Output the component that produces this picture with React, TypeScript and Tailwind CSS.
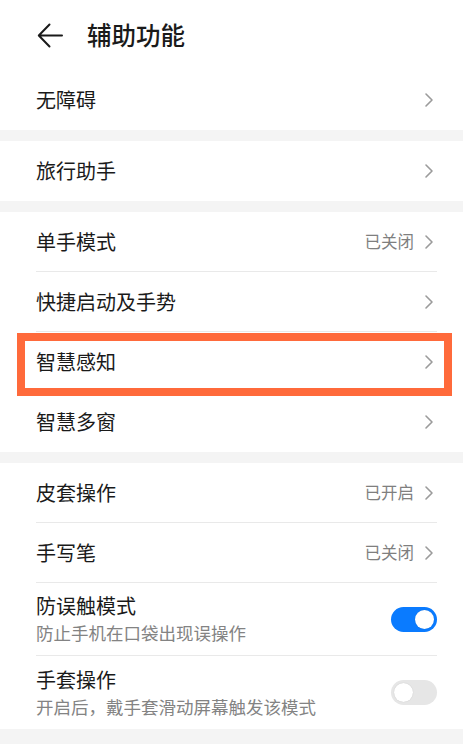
import { ReactNode } from 'react';

const Chevron = () => (
    <svg width="10" height="16" viewBox="0 0 10 16" fill="none" className="shrink-0">
        <polyline points="2,2 8,8 2,14" stroke="#9b9b9b" strokeWidth="1.6" strokeLinecap="round" strokeLinejoin="round" />
    </svg>
);

const Toggle = ({ on }: { on: boolean }) => (
    <div
        className={`flex h-[25px] w-[46px] shrink-0 items-center rounded-full px-[3px] ${
            on ? 'justify-end bg-[#0a7bff]' : 'justify-start bg-[#e6e6e6]'
        }`}
    >
        <div className="h-[19px] w-[19px] rounded-full bg-white shadow-[0_0_1px_rgba(0,0,0,0.2)]" />
    </div>
);

type RowProps = {
    title: string;
    value?: string;
    sub?: string;
    toggle?: boolean;
    last?: boolean;
    highlight?: boolean;
};

const Row = ({ title, value, sub, toggle, last, highlight }: RowProps) => (
    <div className="relative pl-[36px] pr-[26px]">
        <div
            className={`flex items-center justify-between ${sub ? 'h-[73px]' : 'h-[60px]'} ${
                last ? '' : 'border-b border-[#e9e9e9]'
            }`}
        >
            <div className="flex flex-col">
                <span className="text-[20px] leading-[26px] text-[#1a1a1a]">{title}</span>
                {sub && <span className="mt-[1px] text-[17.5px] leading-[25px] text-[#838383]">{sub}</span>}
            </div>
            {toggle !== undefined ? (
                <Toggle on={toggle} />
            ) : (
                <div className="flex items-center gap-[10px] pr-[3px]">
                    {value && <span className="text-[16.5px] text-[#7f7f7f]">{value}</span>}
                    <Chevron />
                </div>
            )}
        </div>
        {highlight && (
            <div className="pointer-events-none absolute left-[17px] top-[1px] h-[63px] w-[435px] border-[8px] border-[#ff6a3b]" />
        )}
    </div>
);

const Group = ({ children }: { children: ReactNode }) => <div className="bg-white">{children}</div>;

const Gap = () => <div className="h-[11px] bg-[#f4f4f4]" />;

export default function App() {
    return (
        <div
            className="h-[744px] w-[463px] overflow-hidden bg-[#f4f4f4]"
            style={{ fontFamily: '"Noto Sans CJK SC", "Noto Sans", sans-serif' }}
        >
            <Group>
                <div className="flex h-[70px] items-center pl-[37px]">
                    <svg width="27" height="27" viewBox="0 0 27 27" fill="none">
                        <path d="M25 13.5H2.5M12.5 2.5L1.8 13.5L12.5 24.5" stroke="#1a1a1a" strokeWidth="2" strokeLinecap="round" strokeLinejoin="round" />
                    </svg>
                    <span className="ml-[23px] text-[24.5px] font-medium text-[#1a1a1a]">辅助功能</span>
                </div>
                <Row title="无障碍" last />
            </Group>
            <Gap />
            <Group>
                <Row title="旅行助手" last />
            </Group>
            <Gap />
            <Group>
                <Row title="单手模式" value="已关闭" />
                <Row title="快捷启动及手势" />
                <Row title="智慧感知" highlight />
                <Row title="智慧多窗" last />
            </Group>
            <Gap />
            <Group>
                <Row title="皮套操作" value="已开启" />
                <Row title="手写笔" value="已关闭" />
                <Row title="防误触模式" sub="防止手机在口袋出现误操作" toggle={true} />
                <Row title="手套操作" sub="开启后，戴手套滑动屏幕触发该模式" toggle={false} last />
            </Group>
        </div>
    );
}
